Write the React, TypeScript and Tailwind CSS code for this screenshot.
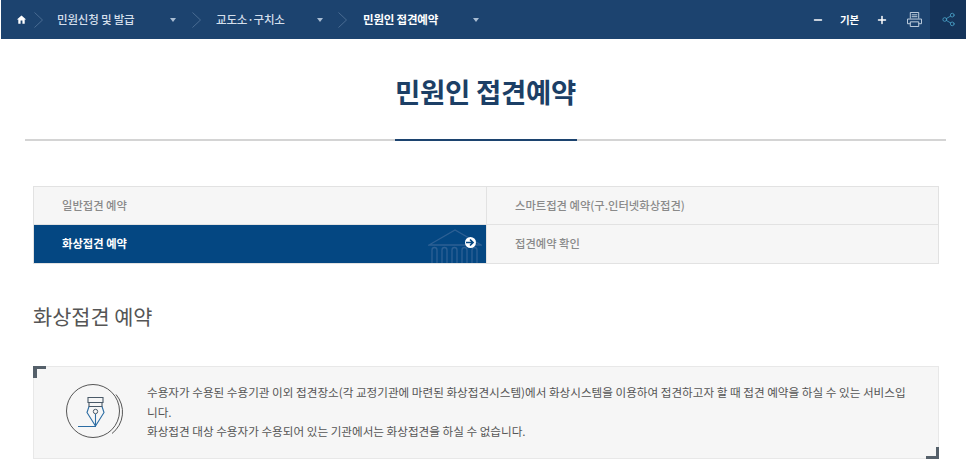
import React from 'react';
import { Plus, Minus, Share2 } from 'lucide-react';

function Caret() {
  return <span className="w-0 h-0 border-x-[3px] border-x-transparent border-t-[4px] border-t-[#a9bdd3]" />;
}

function Chevron() {
  return (
    <svg width="9" height="16" viewBox="0 0 9 16" fill="none" stroke="#4a6c92" strokeWidth="1" className="shrink-0">
      <path d="M.5 .5L8.5 8 .5 15.5" />
    </svg>
  );
}

function Crumb({ label, width, active }: { label: string; width: string; active?: boolean }) {
  return (
    <div className={`flex items-center justify-between ${width}`}>
      <span className={active ? 'text-white font-bold' : 'text-[#d4dfeb] font-medium'}>{label}</span>
      <Caret />
    </div>
  );
}

function NavBar() {
  return (
    <nav className="h-[39px] ml-px bg-[#1c436f] flex items-center justify-between text-[11.5px] tracking-[-0.2px]">
      <div className="flex items-center">
        <svg className="ml-[15px]" width="11" height="11" viewBox="0 0 24 24" fill="#fff">
          <path d="M10 21v-7h4v7h5v-9h3L12 3 2 12h3v9z" />
        </svg>
        <div className="ml-[7px] mr-[14px]"><Chevron /></div>
        <Crumb label="민원신청 및 발급" width="w-[119px]" />
        <div className="ml-[16px] mr-[15px]"><Chevron /></div>
        <Crumb label="교도소·구치소" width="w-[107px]" />
        <div className="ml-[15px] mr-[16px]"><Chevron /></div>
        <Crumb label="민원인 접견예약" width="w-[116px]" active />
      </div>
      <div className="flex items-center h-full">
        <Minus className="w-[12px] h-[12px] text-white" strokeWidth={3} />
        <span className="ml-[16px] w-[20px] text-[10.5px] text-white font-bold whitespace-nowrap">기본</span>
        <Plus className="ml-[16px] w-[12px] h-[12px] text-white" strokeWidth={3} />
        <svg className="ml-[19px]" width="15" height="15" viewBox="0 0 16 16" fill="none" stroke="#c9d6e4" strokeWidth="1">
          <path d="M3.500 7V.5h9V7M.5 7.500v5h3M15.500 7.500v5h-3M.5 7.500h15M3.500 10.500h9v5h-9zM5 3h6M5 5h6" />
        </svg>
        <div className="ml-[8px] w-[36px] h-full bg-[#15345a] flex items-center justify-center">
          <Share2 className="w-[15px] h-[15px] text-[#4aa3c9]" strokeWidth={1.3} />
        </div>
      </div>
    </nav>
  );
}

function Tab({ label, active, className = '' }: { label: string; active?: boolean; className?: string }) {
  if (active) {
    return (
      <div className={`relative overflow-hidden bg-[#044782] text-white font-bold flex items-center pl-[28px] ${className}`}>
        {label}
        <svg className="absolute left-[394px] top-[4px]" width="54" height="34" viewBox="0 0 54 34" fill="none" stroke="#2d6094" strokeWidth="1.3">
          <path d="M1 16L27 1l26 15z" />
          <path d="M4 34V21a2.500 2.500 0 0 1 5 0v13M14 34V21a2.500 2.500 0 0 1 5 0v13M24 34V21a2.500 2.500 0 0 1 5 0v13M34 34V21a2.500 2.500 0 0 1 5 0v13M44 34V21a2.500 2.500 0 0 1 5 0v13" />
        </svg>
        <span className="absolute left-[431px] top-[12px] w-[11px] h-[11px] rounded-full bg-white flex items-center justify-center">
          <svg width="9" height="9" viewBox="0 0 9 9" fill="none" stroke="#044782" strokeWidth="1.7">
            <path d="M0 4.500h7M4 1.500l3 3-3 3" />
          </svg>
        </span>
      </div>
    );
  }
  return <div className={`bg-[#f6f6f6] text-[#8a8a8a] font-medium flex items-center pl-[28px] ${className}`}>{label}</div>;
}

function PenIcon() {
  return (
    <svg width="58" height="58" viewBox="0 0 58 58" fill="none" className="shrink-0">
      <circle cx="27" cy="27" r="26.500" stroke="#555" strokeWidth="1" />
      <path d="M47 9.500a27 27 0 0 1-4 39" stroke="#555" strokeWidth="1" transform="translate(3 1)" />
      <path d="M22 13.500h15v5H22zM23 18.500h13v4H23z" stroke="#4a5a68" strokeWidth="1.100" />
      <path d="M23 22.500l-2 6 8.500 13.500L38 28.500l-2-6" stroke="#2b6ca3" strokeWidth="1.100" />
      <circle cx="29.500" cy="27.500" r="2.200" stroke="#4a5a68" strokeWidth="1" />
      <path d="M29.500 30v12M12 42.500h18" stroke="#2b6ca3" strokeWidth="1.100" />
    </svg>
  );
}

export default function App() {
  return (
    <div className="w-[966px] h-[473px] overflow-hidden bg-white font-['Noto_Sans_CJK_KR','Noto_Sans',sans-serif]">
      <NavBar />

      <header className="ml-[25px] w-[921px] h-[102px] border-b-2 border-[#d4d4d4] flex justify-center">
        <div className="w-[182px] h-[102px] border-b-2 border-[#1c436f] flex justify-center pt-[32px]">
          <h1 className="text-[27.500px] leading-[40px] font-bold text-[#1c3f66] whitespace-nowrap tracking-[-0.3px]">민원인 접견예약</h1>
        </div>
      </header>

      <div className="ml-[33px] w-[906px] mt-[45px] grid grid-cols-[452px_1fr] grid-rows-[38px_38px] border border-[#e2e2e2] text-[11.300px]">
        <Tab label="일반접견 예약" className="border-b border-[#e2e2e2]" />
        <Tab label="스마트접견 예약(구.인터넷화상접견)" className="border-b border-l border-[#e2e2e2]" />
        <Tab label="화상접견 예약" active className="pb-[2px]" />
        <Tab label="접견예약 확인" className="border-l border-[#e2e2e2] pb-px" />
      </div>

      <h2 className="ml-[33px] mt-[37px] text-[20.800px] leading-[30px] text-[#555]">화상접견 예약</h2>

      <section className="relative ml-[33px] w-[906px] h-[93px] mt-[35px] bg-[#f6f6f6] border border-[#e8e8e8] flex items-center pl-[32px] pr-[28px]">
        <span className="absolute -left-px -top-px w-[13px] h-[12px] border-l-[4px] border-t-[3px] border-[#55606a]" />
        <span className="absolute -right-px -bottom-px w-[13px] h-[12px] border-r-[3px] border-b-[3px] border-[#55606a]" />
        <PenIcon />
        <p className="ml-[23px] text-[11.600px] leading-[19.500px] text-[#555]">
          수용자가 수용된 수용기관 이외 접견장소(각 교정기관에 마련된 화상접견시스템)에서 화상시스템을 이용하여 접견하고자 할 때 접견 예약을 하실 수 있는 서비스입니다.
          <br />
          화상접견 대상 수용자가 수용되어 있는 기관에서는 화상접견을 하실 수 없습니다.
        </p>
      </section>
    </div>
  );
}
